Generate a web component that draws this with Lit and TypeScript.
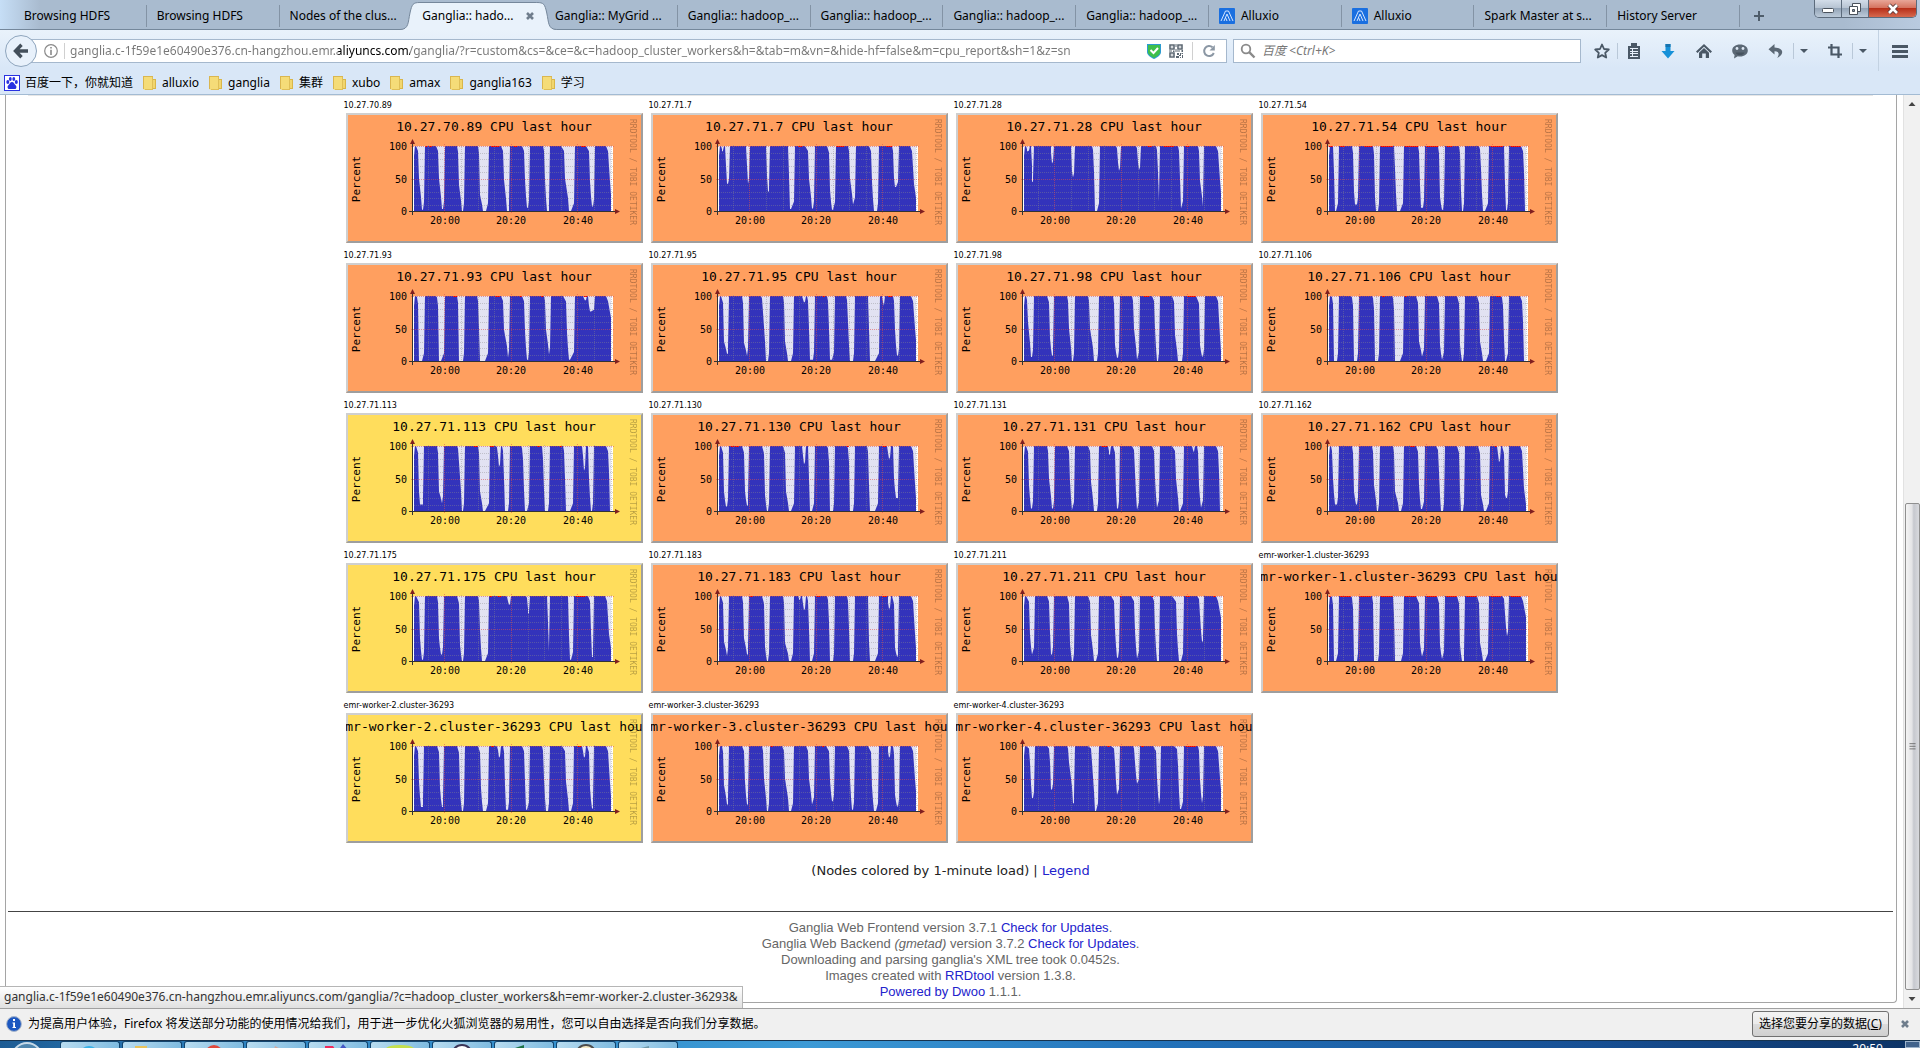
import { LitElement, html, svg, css, nothing } from "lit";
import { customElement, property } from "lit/decorators.js";
import { classMap } from "lit/directives/class-map.js";

/** A dip in CPU use: start x, shoulder x, shoulder %, floor from x, floor to x, floor %, end x. */
type Dip = [number, number, number, number, number, number, number];

interface GraphNode {
  name: string;
  load?: "medium";
  dips: Dip[];
  /** x where the last fall starts, and the last value in per cent */
  tail: [number, number];
  /** stretches along the top where system time shows: x, width */
  system?: [number, number][];
}

const NODES: GraphNode[] = [
  {
    name: "10.27.70.89",
    dips: [[3, 6, 50, 9, 10, 2, 12], [23, 26, 50, 29, 30, 3, 32], [44, 46, 40, 49, 50, 0, 52], [65, 67, 25, 70, 73, 0, 76], [88, 91, 48, 94, 96, 0, 97], [109, 112, 48, 114, 115, 5, 117], [130, 132, 48, 134, 136, 0, 137], [148, 152, 50, 156, 158, 0, 162], [173, 177, 45, 179, 180, 7, 182]],
    tail: [193, 25],
    system: [[12, 2], [16, 3], [78, 8], [101, 3], [168, 5]],
  },
  {
    name: "10.27.71.7",
    dips: [[3, 4, 95, 4, 5, 92, 6], [7, 8, 70, 9, 10, 42, 12], [28, 29, 70, 30, 30, 42, 32], [48, 49, 55, 50, 51, 30, 52], [70, 71, 55, 72, 73, 3, 77], [87, 91, 50, 94, 95, 4, 97], [109, 112, 33, 114, 115, 2, 118], [130, 132, 50, 135, 135, 10, 138], [151, 154, 45, 156, 159, 0, 161], [174, 176, 50, 177, 178, 37, 181]],
    tail: [192, 20],
    system: [[80, 4], [118, 8], [168, 6]],
  },
  {
    name: "10.27.71.28",
    dips: [[3, 4, 95, 4, 5, 92, 7], [8, 9, 70, 9, 10, 45, 11], [28, 28, 90, 29, 29, 73, 31], [48, 49, 60, 50, 50, 52, 52], [69, 71, 60, 72, 74, 0, 77], [93, 95, 75, 96, 96, 62, 98], [113, 115, 75, 116, 116, 63, 118], [133, 135, 60, 136, 136, 14, 137], [155, 157, 50, 158, 158, 4, 161], [175, 177, 46, 180, 180, 7, 181]],
    tail: [193, 28],
    system: [[125, 4], [141, 10], [163, 3]],
  },
  {
    name: "10.27.71.54",
    dips: [[5, 6, 60, 7, 8, 0, 11], [24, 26, 30, 27, 29, 10, 31], [45, 47, 20, 48, 50, 0, 52], [66, 67, 65, 69, 72, 0, 76], [90, 92, 40, 93, 95, 5, 97], [110, 112, 22, 114, 115, 2, 117], [131, 133, 30, 134, 135, 0, 137], [151, 153, 65, 155, 157, 0, 161], [176, 177, 40, 178, 179, 1, 181]],
    tail: [193, 0],
    system: [[1, 4], [12, 5], [36, 8], [53, 12], [77, 13], [98, 12], [119, 5], [163, 12], [183, 10]],
  },
  {
    name: "10.27.71.93",
    dips: [[3, 5, 88, 6, 9, 0, 12], [23, 25, 85, 26, 28, 0, 32], [44, 45, 90, 46, 50, 0, 52], [64, 66, 50, 67, 72, 0, 76], [88, 91, 48, 95, 95, 5, 97], [109, 112, 46, 114, 115, 2, 117], [131, 133, 48, 136, 136, 10, 138], [150, 154, 44, 156, 157, 2, 162], [170, 171, 96, 172, 172, 93, 174], [175, 176, 85, 177, 178, 76, 182]],
    tail: [193, 67],
    system: [[40, 4], [82, 5], [107, 2], [128, 2], [171, 3]],
  },
  {
    name: "10.27.71.95",
    dips: [[3, 6, 30, 9, 10, 11, 11], [24, 26, 28, 29, 29, 8, 31], [43, 45, 75, 48, 50, 0, 52], [65, 67, 30, 70, 73, 0, 76], [84, 85, 95, 86, 86, 90, 88], [89, 91, 50, 92, 95, 2, 97], [109, 111, 50, 112, 114, 2, 117], [128, 130, 60, 132, 135, 0, 137], [150, 151, 50, 152, 157, 0, 162], [164, 165, 90, 166, 166, 85, 167], [175, 177, 48, 179, 180, 8, 182]],
    tail: [193, 32],
    system: [[105, 2], [170, 4]],
  },
  {
    name: "10.27.71.98",
    dips: [[3, 5, 60, 8, 9, 6, 11], [24, 27, 35, 29, 30, 8, 31], [44, 46, 50, 49, 50, 0, 52], [65, 67, 50, 71, 74, 0, 76], [90, 92, 25, 94, 95, 5, 97], [109, 111, 50, 114, 114, 2, 117], [129, 132, 50, 134, 135, 0, 137], [149, 152, 40, 155, 159, 0, 161], [173, 177, 25, 179, 180, 7, 182]],
    tail: [193, 15],
    system: [[121, 5], [164, 9]],
  },
  {
    name: "10.27.71.106",
    dips: [[3, 5, 88, 6, 9, 0, 11], [23, 25, 85, 26, 29, 0, 31], [44, 46, 80, 47, 50, 0, 52], [64, 66, 80, 67, 72, 0, 76], [88, 91, 30, 94, 94, 7, 97], [109, 112, 25, 114, 114, 2, 117], [129, 132, 25, 134, 135, 0, 137], [149, 152, 30, 155, 158, 0, 162], [173, 175, 85, 177, 178, 0, 181]],
    tail: [192, 0],
    system: [[54, 3], [77, 2], [168, 5]],
  },
  {
    name: "10.27.71.113",
    load: "medium",
    dips: [[3, 6, 30, 7, 10, 10, 11], [24, 26, 30, 29, 29, 12, 31], [44, 46, 75, 49, 50, 0, 52], [65, 67, 30, 70, 72, 0, 77], [83, 85, 85, 86, 86, 68, 88], [89, 91, 50, 92, 95, 0, 97], [108, 110, 80, 112, 114, 0, 117], [129, 130, 80, 132, 135, 0, 137], [150, 152, 50, 153, 157, 0, 161], [169, 170, 85, 171, 171, 62, 173], [175, 176, 50, 178, 179, 0, 181]],
    tail: [193, 0],
    system: [[61, 4], [77, 4], [124, 3], [147, 2]],
  },
  {
    name: "10.27.71.130",
    dips: [[3, 6, 30, 8, 9, 7, 11], [24, 27, 30, 29, 30, 8, 31], [44, 47, 25, 49, 50, 0, 52], [65, 68, 30, 71, 73, 0, 77], [84, 85, 85, 86, 86, 72, 88], [90, 91, 50, 92, 94, 0, 97], [109, 111, 75, 112, 115, 0, 117], [129, 131, 75, 132, 135, 0, 137], [149, 151, 40, 152, 157, 0, 161], [169, 170, 90, 171, 171, 80, 173], [175, 176, 50, 178, 180, 20, 181]],
    tail: [193, 20],
    system: [[13, 3], [17, 4], [129, 2], [165, 3]],
  },
  {
    name: "10.27.71.131",
    dips: [[3, 6, 40, 8, 9, 4, 11], [24, 26, 50, 29, 30, 4, 32], [44, 47, 45, 49, 49, 2, 52], [65, 68, 45, 71, 74, 0, 76], [85, 86, 92, 86, 87, 87, 88], [90, 93, 30, 94, 95, 4, 97], [109, 112, 60, 114, 114, 2, 117], [129, 132, 50, 134, 134, 5, 137], [149, 153, 50, 156, 157, 0, 161], [169, 170, 94, 171, 171, 90, 172], [174, 176, 40, 178, 178, 5, 181]],
    tail: [193, 0],
    system: [[79, 5]],
  },
  {
    name: "10.27.71.162",
    dips: [[3, 5, 50, 7, 9, 10, 11], [24, 26, 30, 28, 29, 10, 31], [44, 46, 40, 49, 50, 0, 52], [65, 67, 30, 71, 73, 0, 76], [88, 91, 40, 93, 94, 3, 97], [108, 111, 60, 113, 115, 0, 117], [129, 132, 30, 133, 135, 0, 137], [150, 153, 25, 156, 158, 0, 162], [169, 170, 88, 171, 171, 75, 173], [174, 177, 25, 178, 179, 20, 181]],
    tail: [192, 10],
    system: [[82, 5], [167, 2]],
  },
  {
    name: "10.27.71.175",
    load: "medium",
    dips: [[3, 7, 35, 9, 10, 2, 12], [24, 26, 35, 28, 29, 10, 31], [44, 47, 25, 49, 50, 0, 52], [65, 67, 48, 69, 72, 0, 76], [93, 95, 92, 96, 96, 86, 98], [113, 115, 80, 115, 116, 73, 117], [134, 135, 60, 136, 136, 14, 137], [155, 156, 40, 157, 158, 2, 161], [175, 178, 45, 179, 180, 6, 181]],
    tail: [192, 20],
    system: [[77, 2], [85, 3], [163, 9]],
  },
  {
    name: "10.27.71.183",
    dips: [[3, 6, 30, 9, 9, 8, 11], [24, 26, 35, 29, 30, 10, 31], [44, 47, 22, 49, 50, 0, 52], [65, 67, 28, 71, 73, 0, 76], [80, 81, 96, 81, 82, 94, 83], [84, 85, 88, 86, 86, 78, 88], [89, 91, 50, 92, 94, 0, 97], [109, 111, 60, 112, 115, 0, 117], [129, 131, 50, 132, 135, 0, 137], [150, 151, 30, 152, 157, 0, 161], [170, 170, 90, 171, 171, 80, 173], [174, 177, 20, 179, 180, 7, 181]],
    tail: [193, 20],
    system: [[32, 3], [98, 4], [164, 5]],
  },
  {
    name: "10.27.71.211",
    dips: [[3, 7, 40, 9, 9, 10, 12], [24, 27, 44, 28, 29, 10, 31], [44, 47, 27, 49, 50, 0, 52], [65, 68, 40, 71, 73, 0, 76], [88, 92, 48, 94, 95, 5, 97], [108, 112, 46, 114, 114, 4, 117], [129, 132, 48, 134, 136, 0, 137], [149, 154, 42, 156, 158, 0, 161], [174, 177, 70, 179, 180, 30, 181]],
    tail: [193, 67],
    system: [[97, 2], [128, 2], [163, 4], [190, 3]],
  },
  {
    name: "emr-worker-1.cluster-36293",
    dips: [[3, 5, 86, 6, 8, 0, 11], [23, 25, 82, 26, 29, 0, 31], [44, 45, 90, 46, 50, 0, 52], [65, 66, 70, 67, 73, 0, 76], [88, 92, 28, 94, 94, 7, 97], [109, 112, 25, 114, 114, 3, 117], [129, 132, 25, 134, 136, 0, 137], [149, 152, 28, 155, 157, 0, 161], [174, 177, 73, 179, 179, 38, 181]],
    tail: [193, 68],
    system: [[1, 2], [12, 11], [32, 11], [53, 12], [77, 11], [98, 11], [118, 11], [138, 11], [163, 10], [183, 10]],
  },
  {
    name: "emr-worker-2.cluster-36293",
    load: "medium",
    dips: [[3, 6, 45, 8, 10, 6, 11], [24, 27, 35, 29, 30, 6, 31], [44, 47, 30, 49, 50, 0, 52], [65, 68, 35, 70, 73, 0, 76], [83, 85, 94, 86, 86, 82, 88], [90, 92, 40, 93, 95, 2, 97], [109, 112, 45, 113, 114, 2, 117], [129, 131, 50, 133, 135, 0, 137], [149, 153, 45, 156, 158, 0, 161], [169, 170, 92, 171, 171, 82, 173], [174, 177, 35, 179, 180, 4, 181]],
    tail: [193, 22],
    system: [[78, 3], [165, 3]],
  },
  {
    name: "emr-worker-3.cluster-36293",
    dips: [[4, 6, 40, 9, 10, 10, 11], [24, 27, 45, 29, 30, 10, 31], [44, 46, 50, 49, 50, 0, 52], [64, 67, 50, 71, 73, 0, 76], [88, 91, 50, 94, 94, 10, 97], [108, 112, 47, 114, 115, 15, 117], [129, 132, 50, 134, 135, 2, 137], [150, 154, 38, 156, 158, 0, 161], [170, 170, 92, 171, 171, 82, 173], [175, 177, 25, 179, 180, 7, 182]],
    tail: [193, 30],
    system: [[53, 2], [104, 2]],
  },
  {
    name: "emr-worker-4.cluster-36293",
    dips: [[3, 7, 74, 9, 10, 20, 12], [24, 27, 75, 28, 29, 33, 31], [44, 46, 75, 50, 51, 12, 52], [65, 69, 75, 72, 73, 0, 76], [88, 92, 74, 94, 94, 25, 97], [110, 112, 75, 114, 114, 42, 117], [130, 134, 50, 136, 136, 10, 138], [151, 155, 70, 157, 158, 3, 161], [175, 177, 48, 179, 179, 12, 181]],
    tail: [193, 33],
    system: [[84, 3], [118, 3], [163, 10]],
  },
];

const PLOT = { left: 67, top: 33, width: 200, height: 65 };
const HOURS = [31, 98, 164];
const MINOR = [15, 48, 65, 81, 115, 131, 148, 181, 198];

/** Outline of the filled area: steep falls with a shoulder, and near-vertical rises. */
function areaPath(node: GraphNode): string {
  const at = (x: number, v: number) =>
    `L${PLOT.left + x} ${PLOT.top + (PLOT.height * (100 - v)) / 100}`;
  const base = PLOT.top + PLOT.height;
  const parts = [`M${PLOT.left + 1} ${base}`, at(1, 85), at(2, 100)];
  for (const [start, sx, sv, from, to, v, end] of node.dips) {
    parts.push(at(start, 100));
    if (sx - start > 1) parts.push(at(sx - 1, 100 - (100 - sv) * 0.15));
    parts.push(at(sx, sv));
    if (from - sx > 1) parts.push(at(from - 1, v + (sv - v) * 0.4));
    parts.push(at(from, v), at(to, v));
    parts.push(at(end - 1, v + (100 - v) * 0.12), at(end, 100));
  }
  const [start, last] = node.tail;
  parts.push(at(start, 100), at(start + 2, 92));
  if (last === 0) {
    parts.push(at(start + 3, 60), at(start + 4, 0));
  } else {
    parts.push(at(start + 4, last + (92 - last) * 0.3), at(198, last), at(198, 0));
  }
  return parts.join("") + "Z";
}

@customElement("node-graph")
export class NodeGraph extends LitElement {
  @property({ attribute: false }) node!: GraphNode;

  static styles = css`
    :host { display: block; }
    .label { display: block; padding-top: 2px; font: 8px/14px "DejaVu Sans", Verdana, sans-serif; color: #000; }
    a { display: block; margin-left: 2px; text-decoration: none; }
    svg { display: block; width: 100%; height: auto; }
    text { font-family: "DejaVu Sans Mono", monospace; fill: #000; }
    .title { font-size: 13px; text-anchor: middle; }
    .tick { font-size: 10px; }
    .end { text-anchor: end; }
    .mid { text-anchor: middle; }
    .unit { font-size: 11px; text-anchor: middle; }
    .mark { font-size: 8px; fill: #000; opacity: 0.28; }
    .back { fill: #ff9f5f; }
    .back.medium { fill: #ffdd5c; }
    .lite { fill: #cfcfcf; }
    .shade { fill: #9e9e9e; }
    .canvas { fill: #fff; }
    .idle { fill: #e2e2f2; }
    .user { fill: #3333bb; }
    .sys { fill: #ee0000; }
    .minor { stroke: #8c8c8c; stroke-opacity: 0.4; stroke-dasharray: 1 1; }
    .major { stroke: #de4d4d; stroke-opacity: 0.55; stroke-dasharray: 1 1; }
    .axis { stroke: #333; }
    .arrow { fill: #801f1f; }
  `;

  render() {
    const n = this.node;
    const { left, top, width, height } = PLOT;
    const right = left + width;
    const base = top + height;
    return html`
      <span class="label">${n.name}</span>
      <a href="#${n.name}" aria-label="${n.name} CPU last hour">
        <svg viewBox="0 0 297 130">
          <rect class=${classMap({ back: true, medium: n.load === "medium" })} width="297" height="130" />
          <path class="lite" d="M0 0H297L295 2H2V128L0 130Z" />
          <path class="shade" d="M297 0V130H0L2 128H295V2Z" />
          <rect class="canvas" x=${left} y=${top} width=${width} height=${height} />
          <rect class="idle" x=${left + 1} y=${top} width="197" height=${height} />
          <path class="user" d=${areaPath(n)} />
          ${(n.system ?? []).map(([x, w]) => svg`<rect class="sys" x=${left + x} y=${top} width=${w} height="1" />`)}
          ${[1, 2, 3, 4, 6, 7, 8, 9].map((i) => {
            const y = Math.round(top + (height * i) / 10) + 0.5;
            return svg`<path class="minor" d="M${left - 1} ${y}H${right + 1}" />`;
          })}
          ${MINOR.map((x) => svg`<path class="minor" d="M${left + x + 0.5} ${top - 1}V${base + 2}" />`)}
          <path class="major" d="M${left - 2} ${top + 0.5}H${right + 2}M${left - 2} ${top + 33.5}H${right + 2}" />
          ${HOURS.map((x) => svg`<path class="major" d="M${left + x + 0.5} ${top - 2}V${base + 3}" />`)}
          <path class="axis" d="M${left - 4} ${base + 0.5}H${right + 4}M${left - 0.5} ${base + 4}V${top - 4}" />
          <path class="arrow" d="M${right + 2} ${base - 2}L${right + 7} ${base + 0.5}L${right + 2} ${base + 3}Z" />
          <path class="arrow" d="M${left - 3} ${top - 2}L${left - 0.5} ${top - 7}L${left + 2} ${top - 2}Z" />
          <text class="title" x="148" y="18">${n.name} CPU last hour</text>
          <text class="tick end" x="61" y="37">100</text>
          <text class="tick end" x="61" y="70">50</text>
          <text class="tick end" x="61" y="102">0</text>
          <text class="tick mid" x="99" y="111">20:00</text>
          <text class="tick mid" x="165" y="111">20:20</text>
          <text class="tick mid" x="232" y="111">20:40</text>
          <text class="unit" transform="translate(14 66) rotate(-90)">Percent</text>
          <text class="mark" transform="translate(284 6) rotate(90)">RRDTOOL / TOBI OETIKER</text>
        </svg>
      </a>
    `;
  }
}

const TABS: { title: string; alluxio?: boolean; active?: boolean }[] = [
  { title: "Browsing HDFS" },
  { title: "Browsing HDFS" },
  { title: "Nodes of the clus..." },
  { title: "Ganglia:: hado...", active: true },
  { title: "Ganglia:: MyGrid ..." },
  { title: "Ganglia:: hadoop_..." },
  { title: "Ganglia:: hadoop_..." },
  { title: "Ganglia:: hadoop_..." },
  { title: "Ganglia:: hadoop_..." },
  { title: "Alluxio", alluxio: true },
  { title: "Alluxio", alluxio: true },
  { title: "Spark Master at s..." },
  { title: "History Server" },
];

const BOOKMARKS = ["alluxio", "ganglia", "集群", "xubo", "amax", "ganglia163", "学习"];

const closeIcon = svg`<path d="M2 2L8 8M8 2L2 8" stroke="#6f7d8c" stroke-width="2.6" fill="none" />`;

const icons = {
  star: svg`<path d="M8 1.500L10 6L14.800 6.500L11.200 9.800L12.200 14.500L8 12.100L3.800 14.500L4.800 9.800L1.200 6.500L6 6Z" fill="none" stroke="#4a5866" stroke-width="1.800" stroke-linejoin="round" />`,
  list: svg`<path d="M5 0h6v3h3v13H2V3h3z" fill="#4a5866" /><path d="M4 5h8v9H4z" fill="#e6effa" /><path d="M4 6h2v2H4zm3 0h5v2H7zM4 9h2v1H4zm3 0h5v1H7zm-3 2h2v2H4zm3 0h5v2H7z" fill="#4a5866" />`,
  down: svg`<path d="M5.500 1h5v7h4L8 15.500L1.500 8h4z" fill="#1791d8" /><path d="M5.500 1h5v3h-5z" fill="#1674b0" />`,
  home: svg`<path d="M0 8.500L8 1L16 8.500L14.500 10L8 3.800L1.500 10Z" fill="#4a5866" /><path d="M3 9.800L8 5l5 4.800V15H9.800v-4.500H6.200V15H3z" fill="#4a5866" />`,
  face: svg`<path d="M8 1.500c4.500 0 7.800 2.500 7.800 6s-3.300 6-7.800 6c-.8 0-1.500 0-2.200-.2L2 15.500l.6-3.600C1 10.800.2 9.300.2 7.500c0-3.500 3.300-6 7.800-6z" fill="#5b6875" /><circle cx="5" cy="5.500" r="1.400" fill="#dfe9f5" /><circle cx="11" cy="5.500" r="1.400" fill="#dfe9f5" /><path d="M3.500 9.500h9c-1 2-2.500 2.600-4.500 2.600s-3.500-.6-4.500-2.600z" fill="#46525e" />`,
  undo: svg`<path d="M6.500 1L.5 6.200l6 5.200V8.200c4-.2 5.500 2.300 2.800 6.800 6.500-3.500 7.500-10-2.800-10.600z" fill="#5b6875" />`,
  crop: svg`<path d="M4.500 1v10.500H15M1 4.500h10.500V15" fill="none" stroke="#4a5866" stroke-width="2.200" />`,
  menu: svg`<path d="M0 2h16v3H0zM0 7h16v3H0zM0 12h16v3H0z" fill="#4a5866" />`,
  caret: svg`<path d="M4 6h8l-4 4z" fill="#4a5866" />`,
};

const icon = (shape: unknown) =>
  html`<svg class="icon" viewBox="0 0 16 16" aria-hidden="true">${shape}</svg>`;

const URL_TEXT =
  "ganglia.c-1f59e1e60490e376.cn-hangzhou.emr.aliyuncs.com/ganglia/?r=custom&cs=&ce=&c=hadoop_cluster_workers&h=&tab=m&vn=&hide-hf=false&m=cpu_report&sh=1&z=sn";
const HOVER_TEXT =
  "ganglia.c-1f59e1e60490e376.cn-hangzhou.emr.aliyuncs.com/ganglia/?c=hadoop_cluster_workers&h=emr-worker-2.cluster-36293&";

const TASKS = [
  svg`<circle cx="28" cy="14" r="10" fill="#38b2e8" />`,
  svg`<path d="M12 4h12v6H12z" fill="#e8c35c" />`,
  svg`<circle cx="29" cy="12" r="9" fill="#e0493c" />`,
  svg`<path d="M28 4l7 4h-8z" fill="#d8a79a" />`,
  svg`<path d="M16 4h8l4 6H16z" fill="#ef2b5c" /><path d="M34 2l6 7H29z" fill="#4557c4" />`,
  svg`<path d="M14 8q1-5 15-5t15 5z" fill="#c5e04c" />`,
  svg`<circle cx="29" cy="13" r="10" fill="#fff" stroke="#3b3456" stroke-width="2" />`,
  svg`<path d="M14 8l15-5v6H14z" fill="#1c7245" />`,
  svg`<circle cx="29" cy="13" r="10" fill="#f5e9c4" stroke="#4c4c4c" stroke-width="2" />`,
  svg`<path d="M22 6l8-2v5h-8z" fill="#6f98a8" />`,
];

@customElement("app-root")
export class AppRoot extends LitElement {
  static styles = css`
    :host {
      display: flex;
      flex-direction: column;
      min-height: 100vh;
      box-sizing: border-box;
      background: #fff;
      color: #000;
      font: 12px/16px "Noto Sans", "Noto Sans CJK SC", sans-serif;
    }
    * { box-sizing: border-box; }
    button { border: 0; padding: 0; margin: 0; background: none; font: inherit; color: inherit; display: flex; align-items: center; justify-content: center; }
    .icon { width: 16px; height: 16px; display: block; flex: none; }

    .tabbar { display: flex; height: 30px; padding-left: 14px; background: linear-gradient(90deg, #c6def6 0, #a9bbcf 40px, #a9bbcf 96%, #b9cbe0 100%); border-bottom: 1px solid #74879b; }
    .tabs { flex: 1; display: grid; grid-template-columns: repeat(13, minmax(0, 1fr)); }
    .tab { position: relative; justify-content: flex-start; gap: 6px; padding: 2px 0 0 10px; white-space: nowrap; }
    .tab::after { content: ""; position: absolute; right: 0; top: 5px; height: 22px; border-right: 1px solid #8393a5; }
    .tab.plain::after { display: none; }
    .tab.active { z-index: 1; }
    .shape { position: absolute; left: -12px; top: 2px; width: calc(100% + 24px); height: 28px; }
    .tab span { position: relative; }
    .tab .x { position: relative; width: 10px; height: 10px; margin-left: auto; margin-right: 10px; }
    .after { width: 180px; display: flex; justify-content: space-between; }
    .plus { width: 38px; padding-top: 2px; }
    .win { display: flex; height: 18px; margin-right: 3px; border: 1px solid #5c6b7c; border-top: 0; border-radius: 0 0 5px 5px; overflow: hidden; }
    .win button { width: 27px; background: linear-gradient(#d3dde9, #b5c2d1 48%, #94a5b8 50%, #bccad9); border-right: 1px solid #5c6b7c; }
    .win .shut { width: 47px; border: 0; background: linear-gradient(#e8a698, #d4705c 48%, #b8301a 50%, #d6694e); }

    .bars { background: linear-gradient(#e9f2fb, #d9e7f7 60%); border-bottom: 1px solid #a3bbd3; }
    .nav { display: flex; align-items: center; height: 41px; padding-left: 5px; }
    .back { width: 32px; height: 32px; flex: none; z-index: 1; border: 1px solid #8ea5bd; border-radius: 50%; background: #e8f1fb; }
    .address { flex: 1; min-width: 0; display: flex; align-items: center; height: 24px; margin-left: -6px; padding: 0 2px 0 10px; border: 1px solid #a5b8cd; background: #fff; }
    .address .info { margin: 0 5px 0 1px; }
    .address label { flex: 1; min-width: 0; display: flex; border-left: 1px solid #d0d0d0; padding-left: 5px; }
    input { width: 100%; min-width: 0; border: 0; outline: 0; padding: 0; background: none; font: inherit; color: #777; }
    .url { color: transparent; background: linear-gradient(90deg, #777 268px, #000 268px 340px, #777 340px); background-clip: text; -webkit-background-clip: text; }
    .address .reload { height: 18px; width: 32px; margin-left: 8px; border-left: 1px solid #d0d0d0; }
    .address .qr { margin-left: 6px; }
    .search { width: 348px; height: 24px; display: flex; align-items: center; gap: 6px; margin-left: 6px; padding: 0 6px; border: 1px solid #a5b8cd; background: #fff; }
    .search input { font-style: italic; }
    .search input::placeholder { color: #777; }
    .tools { display: flex; align-items: center; padding-left: 5px; height: 100%; }
    .tools button { width: 36px; height: 16px; }
    .tools .slim { width: 32px; }
    .tools .line { border-right: 1px solid #b9c8d8; }
    .tools .drop { width: 20px; margin-right: 3px; }
    .tools .burger { width: 42px; height: 100%; margin-left: 2px; border-left: 1px solid #c3d2e2; }
    .marks { display: flex; align-items: center; height: 23px; padding: 0 4px; gap: 9px; }
    .marks a { display: flex; align-items: center; gap: 5px; color: #000; text-decoration: none; }

    .view { flex: 1; display: flex; position: relative; background: #fff; }
    .page { flex: 1; min-width: 0; margin: 0 6px 5px 5px; border: 1px solid #a5a5a5; border-top: 0; border-radius: 0 0 4px 4px; padding: 0 3px 2px 2px; display: flex; flex-direction: column; }
    .edge { height: 1px; margin: 0 20px 1px; background: #e6e6e6; }
    .graphs { display: grid; grid-template-columns: repeat(4, 299px); justify-content: center; gap: 4px 6px; }
    .legend { margin: 18px 0 30px; text-align: center; font: 13px/20px "DejaVu Sans", Verdana, sans-serif; color: #222; }
    a { color: #2222cc; text-decoration: none; }
    footer { border-top: 1px solid #444; padding-top: 8px; text-align: center; font: 13px/16px "Liberation Sans", Arial, sans-serif; color: #666; }
    footer p { margin: 0; }
    .scroll { width: 17px; display: flex; flex-direction: column; align-items: center; background: #f1f1f1; border-left: 1px solid #e2e2e2; }
    .scroll svg { display: block; }
    .scroll .gap { flex: 390 0 0; }
    .scroll .thumb { flex: 486 0 0; width: 15px; border: 1px solid #8f8f8f; border-radius: 2px; background: linear-gradient(90deg, #f4f4f4, #e4e4e6 45%, #c6c8ce 60%, #d9dade); }
    .scroll .arrow { height: 18px; }
    .hover { position: absolute; left: 0; bottom: 0; height: 22px; padding: 2px 4px; border: 1px solid #b5b5b5; border-left: 0; border-bottom: 0; background: linear-gradient(#fff, #e0e0e0); color: #333; white-space: nowrap; }

    .notice { display: flex; align-items: center; height: 32px; padding: 0 10px 2px 6px; gap: 6px; border-top: 1px solid #a0a0a0; background: #f0f0f0; }
    .notice .grow { flex: 1; }
    .share { height: 26px; width: 137px; border: 1px solid #707070; border-radius: 3px; background: linear-gradient(#f3f3f3, #ebebeb 48%, #dcdcdc 50%, #cfcfcf); white-space: nowrap; }
    .notice .x { width: 10px; height: 10px; margin-left: 5px; }
    .x svg { width: 10px; height: 10px; }
    .taskbar { display: flex; height: 8px; overflow: hidden; border-top: 1px solid #16334f; background: linear-gradient(90deg, #1d5c94 0, #2f86c4 14%, #3c9ad6 42%, #2271b9 61%, #174f93 83%, #0c3264 100%); color: #fff; }
    .orb { width: 60px; }
    .task { width: 60px; margin-right: 2px; border: 1px solid #12456f; border-bottom: 0; border-radius: 3px 3px 0 0; background: linear-gradient(90deg, #b8dcf0, #7fbbe0); }
    .orb svg, .task svg { display: block; }
    .clock { margin-left: auto; padding-right: 22px; }
    .peek { width: 15px; border: 1px solid #9db4cc; background: #41638c; }
  `;

  private tab(t: (typeof TABS)[number], i: number) {
    const cls = { tab: true, active: !!t.active, plain: !!t.active || i === 2 };
    return html`
      <button class=${classMap(cls)} role="tab" aria-selected=${t.active ? "true" : "false"}>
        ${t.active
          ? html`<svg class="shape" viewBox="0 0 157 28" preserveAspectRatio="none" aria-hidden="true">
              <path d="M0 27.500C9 27.500 8 20 10 11C12 2 13 .5 20 .5H137C144 .5 145 2 147 11C149 20 148 27.500 157 27.500V28H0Z" fill="#e9f2fb" />
              <path d="M0 27.500C9 27.500 8 20 10 11C12 2 13 .5 20 .5H137C144 .5 145 2 147 11C149 20 148 27.500 157 27.500" fill="none" stroke="#74879b" />
            </svg>`
          : nothing}
        ${t.alluxio
          ? html`<svg class="icon" viewBox="0 0 16 16" aria-hidden="true">
              <rect width="16" height="16" rx="1" fill="#1a6fe0" />
              <path d="M2 13L6.500 3H9.500L14 13M5 13L8 6L11 13M8 13L6.500 9.500" fill="none" stroke="#d6e6ff" />
            </svg>`
          : nothing}
        <span>${t.title}</span>
        ${t.active ? html`<svg class="x" viewBox="0 0 10 10" aria-hidden="true">${closeIcon}</svg>` : nothing}
      </button>
    `;
  }

  private chrome() {
    return html`
      <div class="tabbar">
        <div class="tabs" role="tablist">${TABS.map((t, i) => this.tab(t, i))}</div>
        <div class="after">
          <button class="plus" aria-label="New tab">
            <svg width="12" height="12" viewBox="0 0 12 12"><path d="M6 1v10M1 6h10" stroke="#4f5d6b" stroke-width="2" /></svg>
          </button>
          <div class="win">
            <button aria-label="Minimize"><svg width="14" height="14" viewBox="0 0 14 14"><rect x="1.500" y="6.500" width="11" height="4" rx="1" fill="#fff" stroke="#4a525c" /></svg></button>
            <button aria-label="Restore"><svg width="14" height="14" viewBox="0 0 14 14"><path d="M4.500 1.500h8v8h-8z" fill="#fff" stroke="#4a525c" /><path d="M1.500 4.500h8v8h-8z" fill="#fff" stroke="#4a525c" /><path d="M4.500 7.500h2v2h-2z" fill="#8b99a8" stroke="#4a525c" /></svg></button>
            <button class="shut" aria-label="Close"><svg width="14" height="14" viewBox="0 0 14 14"><path d="M3 3l8 8M11 3l-8 8" stroke="#5a3a3a" stroke-width="4.500" /><path d="M3 3l8 8M11 3l-8 8" stroke="#fff" stroke-width="2.600" /></svg></button>
          </div>
        </div>
      </div>
      <div class="bars">
        <div class="nav">
          <button class="back" aria-label="Back">
            <svg class="icon" viewBox="0 0 16 16"><path d="M15 8H3M8.500 1.800L2.500 8l6 6.200" fill="none" stroke="#434f5b" stroke-width="3.400" /></svg>
          </button>
          <div class="address">
            <svg class="icon info" viewBox="0 0 16 16" aria-hidden="true"><circle cx="8" cy="8" r="6.300" fill="none" stroke="#8a8a8a" stroke-width="1.200" /><path d="M7.200 4h1.600v1.600H7.200zM7.200 6.800h1.600V12H7.200z" fill="#8a8a8a" /></svg>
            <label><input class="url" aria-label="Address" spellcheck="false" .value=${URL_TEXT} /></label>
            <svg class="icon" viewBox="0 0 16 16" aria-hidden="true"><path d="M1 1h14v8c0 3.500-4 5.500-7 7c-3-1.500-7-3.500-7-7z" fill="#2d9bd0" /><path d="M2 2h12v7c0 3-3.500 4.500-6 6c-2.500-1.500-6-3-6-6z" fill="#3fbf4b" /><path d="M4.500 7l3 3l4.500-5" fill="none" stroke="#fff" stroke-width="2" /></svg>
            <svg class="icon qr" viewBox="0 0 16 16" aria-hidden="true"><path d="M2 2h4v4H2zM10 2h4v4h-4zM2 10h4v4H2z" fill="none" stroke="#5d6873" stroke-width="1.600" /><path d="M3.500 3.500h1v1h-1zM11.500 3.500h1v1h-1zM3.500 11.500h1v1h-1zM7.500 1h1v3h-1zM7.500 6h1v3h-1zM1 7.500h3v1H1zM9 7.500h3v1H9zM13.500 7h1.500v2h-1.500zM9 10h2v2H9zM12 10h1v3h-1zM14 12h1v3h-1zM8 13h3v2H8zM12 14h1v1h-1zM5 7.500h1.500v1.500H5zM11 12h1v1h-1zM13.500 10h1.500v1h-1.500z" fill="#5d6873" /></svg>
            <button class="reload" aria-label="Reload"><svg class="icon" viewBox="0 0 16 16"><path d="M11.500 4.300A5 5 0 1 0 12.800 10" fill="none" stroke="#8b97a4" stroke-width="2" /><path d="M13.800 2v5.500H8.500z" fill="#8b97a4" /></svg></button>
          </div>
          <div class="search">
            <svg class="icon" viewBox="0 0 16 16" aria-hidden="true"><circle cx="6" cy="6" r="4.300" fill="none" stroke="#8a8a8a" stroke-width="1.800" /><path d="M9.200 9.200L14.500 14.500" stroke="#8a8a8a" stroke-width="2.400" /></svg>
            <input type="search" aria-label="Search" placeholder="百度 <Ctrl+K>" />
          </div>
          <div class="tools">
            <button class="slim line" aria-label="Bookmark">${icon(icons.star)}</button>
            <button class="slim" aria-label="Bookmark list">${icon(icons.list)}</button>
            <button aria-label="Downloads">${icon(icons.down)}</button>
            <button aria-label="Home">${icon(icons.home)}</button>
            <button aria-label="Chat">${icon(icons.face)}</button>
            <button class="line" aria-label="Undo">${icon(icons.undo)}</button>
            <button class="drop" aria-label="Undo options">${icon(icons.caret)}</button>
            <button class="line" aria-label="Screenshot">${icon(icons.crop)}</button>
            <button class="drop" aria-label="Screenshot options">${icon(icons.caret)}</button>
            <button class="burger" aria-label="Menu">${icon(icons.menu)}</button>
          </div>
        </div>
        <nav class="marks">
          <a href="#baidu">
            <svg class="icon" viewBox="0 0 16 16" aria-hidden="true"><rect x=".5" y=".5" width="15" height="15" fill="#fff" stroke="#2932e1" /><g fill="#2932e1"><ellipse cx="3.800" cy="7" rx="1.500" ry="2" /><ellipse cx="6.300" cy="4" rx="1.400" ry="2" /><ellipse cx="9.800" cy="4" rx="1.400" ry="2" /><ellipse cx="12.300" cy="7" rx="1.500" ry="2" /><path d="M8 7c2 0 2.200 2 3.600 3.200s1 3.800-1 3.800H5.400c-2 0-2.400-2.600-1-3.800S6 7 8 7z" /></g></svg>
            百度一下，你就知道
          </a>
          ${BOOKMARKS.map(
            (b) => html`<a href="#${b}">
              <svg width="15" height="16" viewBox="0 0 15 16" aria-hidden="true"><path d="M1 1h10v3h3v10H1z" fill="#d9b64a" /><path d="M1 1h10v14H3L1 14z" fill="#f5dc78" /><path d="M1 1h10v1H2v12H1z" fill="#dab650" /><path d="M10 2h1v13H3v-1h7z" fill="#dfbf58" /><path d="M11 5h2v8h-2z" fill="#f1d66e" /></svg>
              ${b}
            </a>`,
          )}
        </nav>
      </div>
    `;
  }

  render() {
    return html`
      ${this.chrome()}
      <div class="view">
        <main class="page">
          <div class="edge"></div>
          <div class="graphs">${NODES.map((n) => html`<node-graph .node=${n}></node-graph>`)}</div>
          <div class="legend">(Nodes colored by 1-minute load) | <a href="#legend">Legend</a></div>
          <footer>
            <p>Ganglia Web Frontend version 3.7.1 <a href="#updates">Check for Updates</a>.</p>
            <p>Ganglia Web Backend <i>(gmetad)</i> version 3.7.2 <a href="#updates">Check for Updates</a>.</p>
            <p>Downloading and parsing ganglia's XML tree took 0.0452s.</p>
            <p>Images created with <a href="#rrdtool">RRDtool</a> version 1.3.8.</p>
            <p><a href="#dwoo">Powered by Dwoo</a> 1.1.1.</p>
          </footer>
        </main>
        <div class="scroll" aria-hidden="true">
          <svg class="arrow" width="16" viewBox="0 0 16 18"><path d="M4.500 11h7L8 7z" fill="#444" /></svg>
          <div class="gap"></div>
          <svg class="thumb" viewBox="0 0 15 486"><path d="M4 239.500h7M4 242.500h7M4 245.500h7" stroke="#666" /></svg>
          <svg class="arrow" width="16" viewBox="0 0 16 18"><path d="M4.500 7h7L8 11z" fill="#444" /></svg>
        </div>
        <div class="hover">${HOVER_TEXT}</div>
      </div>
      <div class="notice">
        <svg class="icon" viewBox="0 0 16 16" aria-hidden="true"><circle cx="8" cy="8" r="7.400" fill="#1c57c0" stroke="#a9b6c9" /><path d="M7 3h2v2H7zM6.500 6.500H9V11h1v1H6.500v-1H7.200V7.500h-.7z" fill="#fff" /></svg>
        <span>为提高用户体验，Firefox 将发送部分功能的使用情况给我们，用于进一步优化火狐浏览器的易用性，您可以自由选择是否向我们分享数据。</span>
        <span class="grow"></span>
        <button class="share">选择您要分享的数据(<u>C</u>)</button>
        <button class="x" aria-label="Dismiss"><svg viewBox="0 0 10 10">${closeIcon}</svg></button>
      </div>
      <div class="taskbar">
        <div class="orb"><svg width="60" height="8" viewBox="0 0 60 8"><circle cx="27" cy="17" r="15" fill="#4f86ae" stroke="#c5d9e8" stroke-width="2" /></svg></div>
        ${TASKS.map((t) => html`<div class="task"><svg width="58" height="8" viewBox="0 0 58 8">${t}</svg></div>`)}
        <span class="clock">20:50</span>
        <div class="peek"></div>
      </div>
    `;
  }
}
